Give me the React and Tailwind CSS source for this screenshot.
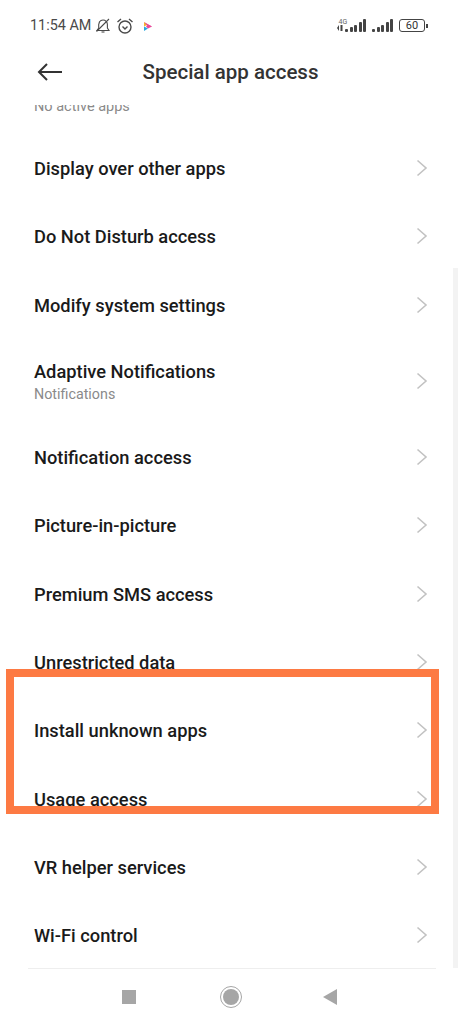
import React from "react";

const font = { fontFamily: "Roboto, sans-serif" };

function Chevron() {
  return (
    <svg width="12" height="18" viewBox="0 0 12 18" fill="none" className="shrink-0 mb-[2px]">
      <path d="M1.5 1.5 L10 9 L1.5 16.5" stroke="#c2c2c2" strokeWidth="1.6" />
    </svg>
  );
}

function Row({ title, sub, tall }) {
  return (
    <div className={`flex items-center justify-between pl-[34px] pr-[33px] ${tall ? "h-[84px]" : "h-[68.3px]"}`}>
      <div className="flex flex-col">
        <span className="text-[18.3px] leading-[24px] font-medium text-[#1a1a1a] whitespace-nowrap">{title}</span>
        {sub && <span className="text-[14.3px] leading-[20px] text-[#8a8a8a]">{sub}</span>}
      </div>
      <Chevron />
    </div>
  );
}

const rows = [
  { title: "Display over other apps" },
  { title: "Do Not Disturb access" },
  { title: "Modify system settings" },
  { title: "Adaptive Notifications", sub: "Notifications", tall: true },
  { title: "Notification access" },
  { title: "Picture-in-picture" },
  { title: "Premium SMS access" },
  { title: "Unrestricted data" },
  { title: "Install unknown apps" },
  { title: "Usage access" },
  { title: "VR helper services" },
  { title: "Wi-Fi control" },
];

function Signal({ heights, withArrows }) {
  return (
    <div className="flex items-end gap-[1.5px]">
      {withArrows && (
        <svg width="6" height="6" viewBox="0 0 6 6" className="mr-[1px] mb-[1px]">
          <path d="M0 3 L2 0 V6 Z M3.5 0 H5.5 V6 H3.5 Z" fill="#444" />
        </svg>
      )}
      {heights.map((h, i) => (
        <div key={i} className="w-[3px] bg-[#444] rounded-[1px]" style={{ height: h }} />
      ))}
    </div>
  );
}

export default function App() {
  return (
    <div className="relative w-[461px] h-[1024px] bg-white overflow-hidden" style={font}>
      {/* Status bar */}
      <div className="h-[50px] flex items-start justify-between pl-[30px] pr-[33px] pt-[16px]">
        <div className="flex items-center text-[#4a4a4a]">
          <span className="text-[14.4px] leading-[20px] font-normal whitespace-nowrap">11:54 AM</span>
          <svg width="16" height="16" viewBox="0 0 16 16" fill="none" stroke="#4a4a4a" strokeWidth="1.1" className="ml-[4px]">
            <path d="M2 12.5 H14 L12.4 10 V6.5 C12.4 4 10.5 2 8 2 C6.5 2 5.3 2.7 4.5 3.8 L3.7 6.5 V10 Z" />
            <path d="M6.5 14 H9.5" />
            <path d="M1.5 13.5 L14 1" />
          </svg>
          <svg width="18" height="18" viewBox="0 0 18 18" fill="none" stroke="#4a4a4a" strokeWidth="1.4" className="ml-[5px]">
            <circle cx="9" cy="10" r="6" />
            <path d="M6.5 9.5 L9 12 L11.5 9.5" />
            <path d="M1.5 5 L5 2 M16.5 5 L13 2" />
          </svg>
          <svg width="10" height="11" viewBox="0 0 10 11" className="ml-[9px]">
            <path d="M1 1 L5 3.5 L1 5.5 Z" fill="#f5b52e" />
            <path d="M1 5.5 L5 7.5 L1 10 Z" fill="#28a9e0" />
            <path d="M1 1 L9 5.5 L5 5.5 Z" fill="#e8489a" />
            <path d="M5 3.5 L9 5.5 L5 7.5 L3 5.5 Z" fill="#e8489a" />
          </svg>
        </div>
        <div className="flex items-end mt-[3px]">
          <div className="relative">
            <span className="absolute left-[2px] top-[-1px] text-[7px] leading-[8px] text-[#666]">4G</span>
            <Signal withArrows heights={[3, 5, 7, 10, 13]} />
          </div>
          <div className="ml-[6px]">
            <Signal heights={[3, 5, 7, 10, 13]} />
          </div>
          <div className="flex items-center ml-[6px]">
            <div className="w-[26px] h-[13px] border-[1.5px] border-[#444] rounded-[3px] flex items-center justify-center text-[11px] leading-none text-[#333]">
              60
            </div>
            <div className="w-[2px] h-[4px] bg-[#444] ml-[1px]" />
          </div>
        </div>
      </div>

      {/* Header */}
      <div className="relative h-[55px] flex items-start justify-center pt-[8px]">
        <svg width="26" height="18" viewBox="0 0 26 18" fill="none" stroke="#333" strokeWidth="2" className="absolute left-[37px] top-[13px]">
          <path d="M25 9 H2 M10 1 L2 9 L10 17" />
        </svg>
        <span className="text-[20.5px] leading-[28px] font-medium text-[#333] whitespace-nowrap">Special app access</span>
      </div>

      {/* List */}
      <div className="relative h-[863px] overflow-hidden">
        <div className="h-[30px] overflow-hidden">
          <div className="-mt-[8px] pl-[34px] text-[14.5px] leading-[20px] text-[#8a8a8a]">No active apps</div>
        </div>
        <div>
          {rows.map((r) => (
            <Row key={r.title} {...r} />
          ))}
        </div>
        <div className="absolute right-[3px] top-[163px] bottom-0 w-[5px] bg-[#f3f3f3]" />
      </div>

      {/* Nav bar */}
      <div className="mx-[28px] w-[408px] border-t border-[#eeeeee] h-[56px] relative">
        <div className="flex items-center h-[55px]">
          <div className="ml-[94px] w-[14px] h-[14px] bg-[#a6a6a6]" />
          <div className="ml-[84px] w-[22px] h-[22px] rounded-full border-[1.5px] border-[#a6a6a6] flex items-center justify-center">
            <div className="w-[16px] h-[16px] rounded-full bg-[#a6a6a6]" />
          </div>
          <svg width="14" height="16" viewBox="0 0 14 16" className="ml-[81px]">
            <path d="M14 0 V16 L0 8 Z" fill="#a6a6a6" />
          </svg>
        </div>
      </div>

      {/* Highlight */}
      <div className="absolute left-[6px] top-[669px] w-[433px] h-[145px] border-[8px] border-[#fd7a43]" />
    </div>
  );
}
